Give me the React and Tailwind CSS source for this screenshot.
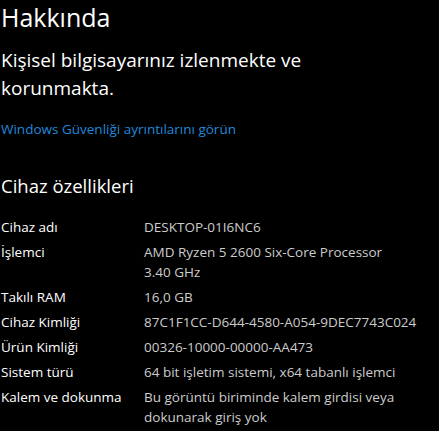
import React from 'react';

const specs = [
  { label: 'Cihaz adı', value: ['DESKTOP-01I6NC6'] },
  { label: 'İşlemci', value: ['AMD Ryzen 5 2600 Six-Core Processor', '3.40 GHz'] },
  { label: 'Takılı RAM', value: ['16,0 GB'] },
  { label: 'Cihaz Kimliği', value: ['87C1F1CC-D644-4580-A054-9DEC7743C024'] },
  { label: 'Ürün Kimliği', value: ['00326-10000-00000-AA473'] },
  { label: 'Sistem türü', value: ['64 bit işletim sistemi, x64 tabanlı işlemci'] },
  { label: 'Kalem ve dokunma', value: ['Bu görüntü biriminde kalem girdisi veya', 'dokunarak giriş yok'] },
];

const App = () => {
  return (
    <div
      className="w-[439px] h-[431px] overflow-hidden bg-black text-white pl-[1px]"
      style={{ fontFamily: '"Open Sans", "Noto Sans", sans-serif' }}
    >
      <h1 className="text-[25px] leading-[34px] font-normal">Hakkında</h1>

      <p className="mt-[12px] text-[19px] leading-[28px]">
        Kişisel bilgisayarınız izlenmekte ve
        <br />
        korunmakta.
      </p>

      <a href="#" className="block mt-[17px] text-[13.5px] leading-[20px] text-[#2189dc]">
        Windows Güvenliği ayrıntılarını görün
      </a>

      <h2 className="mt-[34px] text-[18.5px] leading-[26px] font-normal">Cihaz özellikleri</h2>

      <dl className="mt-[18px] flex flex-col gap-[5px] text-[13.5px] leading-[20px]">
        {specs.map((row) => (
          <div key={row.label} className="grid grid-cols-[143px_1fr]">
            <dt className="text-white">{row.label}</dt>
            <dd className="text-[#cccccc]">
              {row.value.map((line) => (
                <div key={line}>{line}</div>
              ))}
            </dd>
          </div>
        ))}
      </dl>
    </div>
  );
};

export default App;
